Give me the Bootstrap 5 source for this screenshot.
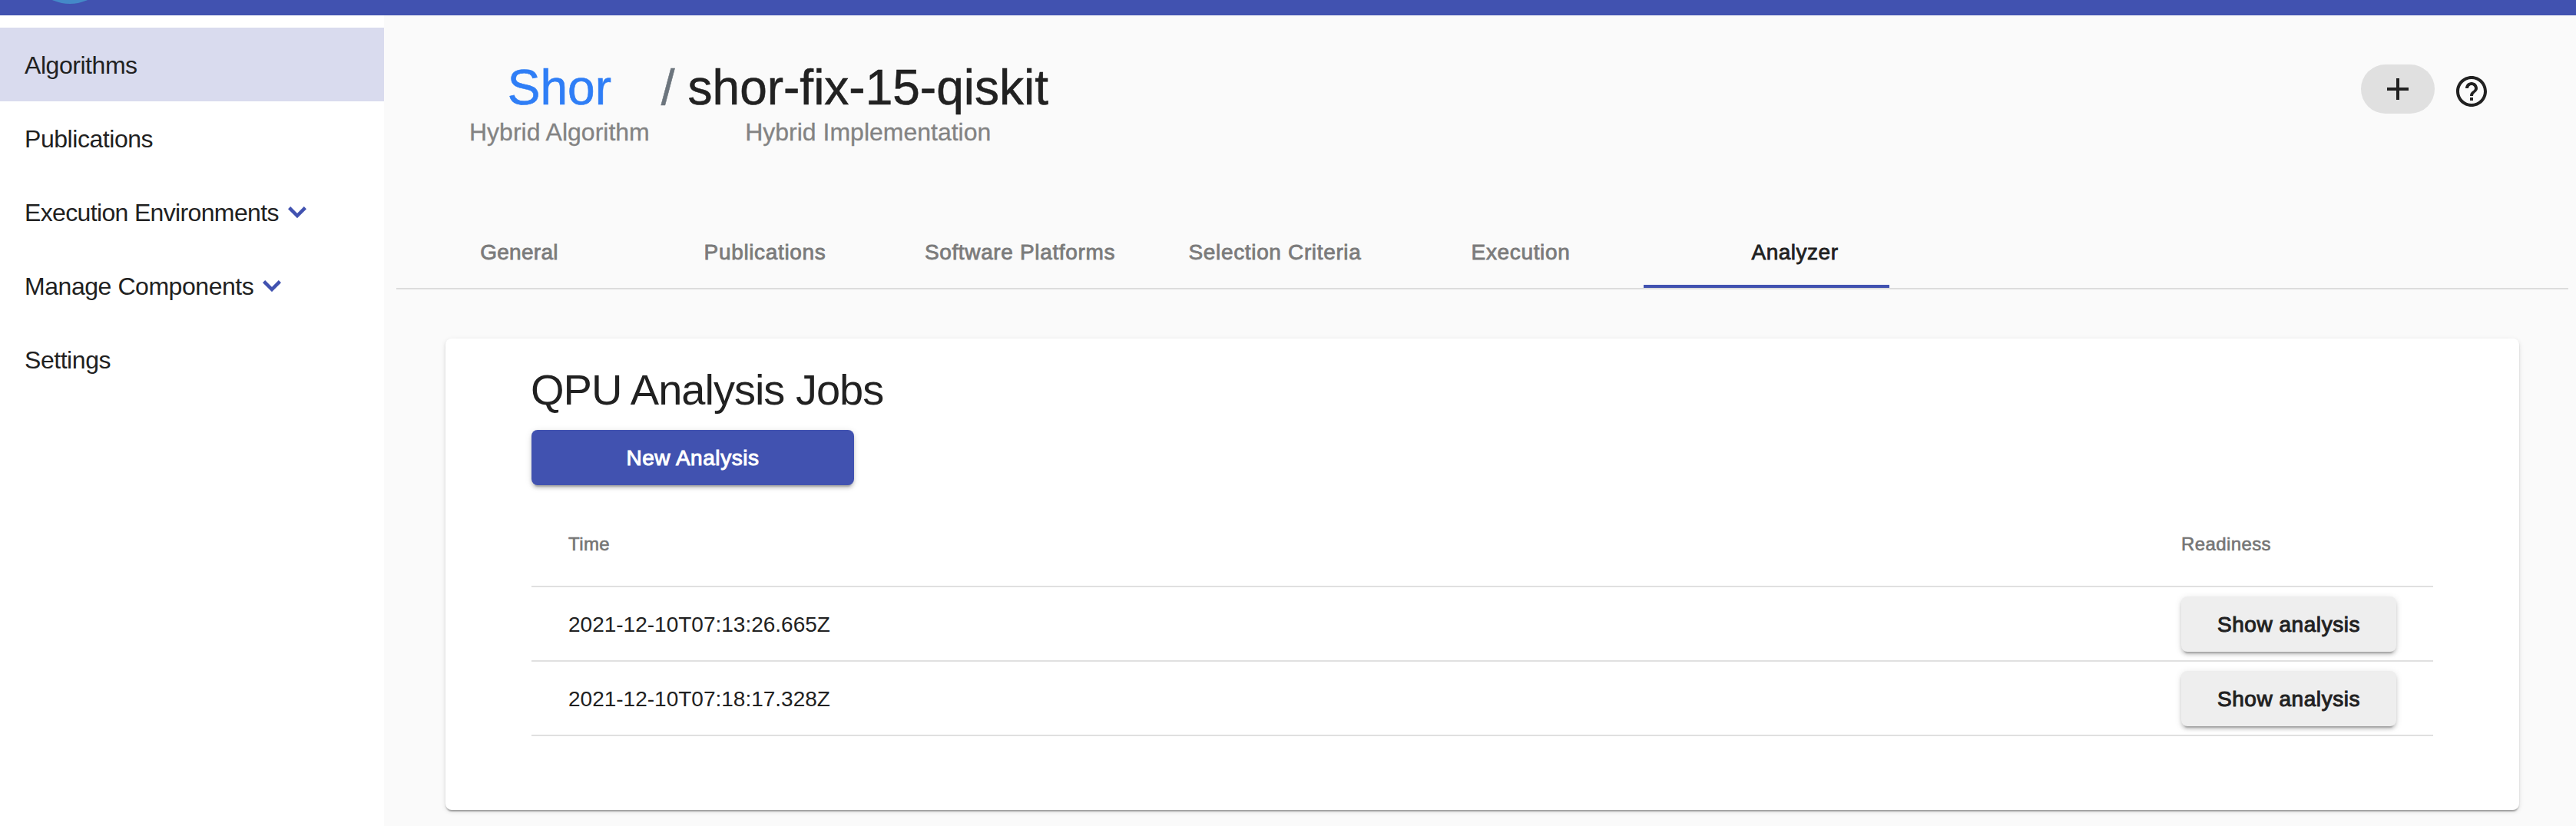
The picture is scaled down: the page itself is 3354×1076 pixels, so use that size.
<!DOCTYPE html>
<html lang="en">
<head>
<meta charset="utf-8">
<meta name="viewport" content="width=device-width, initial-scale=1">
<title>QPU Analysis Jobs</title>
<link href="https://cdn.jsdelivr.net/npm/bootstrap@5.3.0/dist/css/bootstrap.min.css" rel="stylesheet">
<style>
:root { --indigo: #4152b0; --ink: #212121; }
body { font-family: "Liberation Sans", Arial, sans-serif; color: var(--ink); background: #fafafa; height: 1076px; overflow: hidden; }
.topbar { height: 20px; background: var(--indigo); overflow: hidden; padding: 0 0 0 36px; }
.topbar svg { display: block; }
.page-body { height: 1056px; }
.side { width: 500px; background: #fff; padding-top: 16px; }
.side .nav-link { height: 96px; padding: 2px 32px 0; font-size: 32px; line-height: 48px; letter-spacing: -.45px; color: var(--ink); gap: 12px; }
.side .nav-link.long-label { letter-spacing: -.65px; }
.side .nav-link.active { background: #d9dbee; }
.side svg { margin-top: -1px; }
.heading { padding: 56px 112px 0 107px; height: 259px; }
.crumb-big { font-size: 64px; line-height: 76px; -webkit-text-stroke: .6px currentColor; }
.crumb-sub { font-size: 32px; line-height: 36px; color: #838383; margin-top: 2px; -webkit-text-stroke: .3px currentColor; }
.crumb-link { color: #2f7ef6; }
.crumb-slash { color: #6c757d; margin: 0 17px 0 15px; }
.pill { width: 96px; height: 64px; border-radius: 32px; background: #e0e0e0; border: 0; }
.tools { margin-top: 8px; }
.tabs { margin: 0 10px 0 16px; height: 98px; border-bottom: 2px solid #dcdcdc; }
.tabs .nav-link { width: 320px; flex: none; height: 96px; padding: 3px 0 0; border: 0; border-radius: 0; font-size: 28px; letter-spacing: .65px; color: #7b7b7b; -webkit-text-stroke: .8px currentColor; }
.tabs .nav-link.tight-label { letter-spacing: .3px; }
.tabs .nav-link.wide-tab { width: 344px; }
.tabs .nav-link.active { color: var(--ink); border-bottom: 4px solid var(--indigo); padding: 7px 0 0 74px; letter-spacing: .5px; }
.panel { margin: 64px 74px 0 80px; height: 614px; border: 0; border-radius: 8px; padding: 31px 112px; background: #fff; box-shadow: 0 4px 2px -2px rgba(0,0,0,.2), 0 2px 2px 0 rgba(0,0,0,.14), 0 2px 6px 0 rgba(0,0,0,.12); }
.panel h1 { font-size: 56px; line-height: 72px; letter-spacing: -1px; margin: 0 0 16px -1px; font-weight: 400; }
.raised { height: 72px; border: 0; border-radius: 8px; font-size: 28px; letter-spacing: .55px; padding: 1px 0 0; -webkit-text-stroke: 1px currentColor; box-shadow: 0 6px 2px -4px rgba(0,0,0,.2), 0 4px 4px 0 rgba(0,0,0,.14), 0 2px 10px 0 rgba(0,0,0,.12); }
.raised-main { width: 420px; background: var(--indigo); color: #fff; }
.raised-plain { width: 280px; background: #eee; color: var(--ink); padding-top: 2px; }
.jobs { margin: 20px 0 0; color: var(--ink); table-layout: fixed; }
.jobs > :not(caption) > * > * { padding: 0 48px; border-bottom: 2px solid #e0e0e0; vertical-align: middle; background: transparent; color: inherit; }
.jobs > thead > tr > th { height: 112px; padding-top: 3px; font-size: 24px; font-weight: 400; letter-spacing: .4px; color: #757575; -webkit-text-stroke: .6px currentColor; }
.jobs > tbody > tr > td { height: 97px; font-size: 28px; }
.jobs > tbody > tr > td:first-child { padding-top: 2px; }
.jobs th:last-child, .jobs td:last-child { width: 376px; }
</style>
<script src="https://cdn.jsdelivr.net/npm/bootstrap@5.3.0/dist/js/bootstrap.bundle.min.js"></script>
</head>
<body>
<header class="topbar">
  <svg width="110" height="20" viewBox="0 0 110 20"><circle cx="55" cy="-50" r="55" fill="#4489c8"/></svg>
</header>
<div class="page-body d-flex">
  <nav class="side nav flex-column flex-nowrap flex-shrink-0">
    <a class="nav-link active d-flex align-items-center">Algorithms</a>
    <a class="nav-link d-flex align-items-center">Publications</a>
    <a class="nav-link long-label d-flex align-items-center">Execution Environments
      <svg width="24" height="15" viewBox="0 0 24 15" fill="none" stroke="#4152b0" stroke-width="4.500"><path d="M1.600 1.600 12 12 22.400 1.600"/></svg></a>
    <a class="nav-link d-flex align-items-center">Manage Components
      <svg width="24" height="15" viewBox="0 0 24 15" fill="none" stroke="#4152b0" stroke-width="4.500"><path d="M1.600 1.600 12 12 22.400 1.600"/></svg></a>
    <a class="nav-link d-flex align-items-center">Settings</a>
  </nav>
  <main class="flex-grow-1">
    <div class="heading d-flex align-items-start">
      <div class="text-center ps-1">
        <div class="crumb-big crumb-link">Shor</div>
        <div class="crumb-sub">Hybrid Algorithm</div>
      </div>
      <div class="crumb-big crumb-slash">/</div>
      <div class="text-center">
        <div class="crumb-big">shor-fix-15-qiskit</div>
        <div class="crumb-sub">Hybrid Implementation</div>
      </div>
      <div class="tools ms-auto d-flex align-items-start gap-4">
        <button class="pill d-flex align-items-center justify-content-center p-0" aria-label="Add">
          <svg width="28" height="28" viewBox="0 0 28 28"><path d="M12 0h4v12h12v4H16v12h-4V16H0v-4h12z" fill="#212121"/></svg>
        </button>
        <svg class="mt-2" width="48" height="54" viewBox="0 -1.5 24 27" fill="#212121"><path d="M11 18h2v-2h-2v2zm1-16C6.480 2 2 6.480 2 12s4.480 10 10 10 10-4.480 10-10S17.520 2 12 2zm0 18c-4.410 0-8-3.590-8-8s3.590-8 8-8 8 3.590 8 8-3.590 8-8 8zm0-14c-2.210 0-4 1.790-4 4h2c0-1.100.9-2 2-2s2 .9 2 2c0 2-3 1.750-3 5h2c0-2.250 3-2.500 3-5 0-2.210-1.790-4-4-4z"/></svg>
      </div>
    </div>
    <div class="tabs nav flex-nowrap">
      <a class="nav-link tight-label d-flex align-items-center justify-content-center">General</a>
      <a class="nav-link d-flex align-items-center justify-content-center">Publications</a>
      <a class="nav-link wide-tab d-flex align-items-center justify-content-center">Software Platforms</a>
      <a class="nav-link d-flex align-items-center justify-content-center">Selection Criteria</a>
      <a class="nav-link d-flex align-items-center justify-content-center">Execution</a>
      <a class="nav-link active d-flex align-items-center justify-content-center">Analyzer</a>
    </div>
    <section class="panel card">
      <h1>QPU Analysis Jobs</h1>
      <button class="btn raised raised-main">New Analysis</button>
      <table class="table jobs">
        <thead><tr><th>Time</th><th>Readiness</th></tr></thead>
        <tbody>
          <tr><td>2021-12-10T07:13:26.665Z</td><td><button class="btn raised raised-plain d-block">Show analysis</button></td></tr>
          <tr><td>2021-12-10T07:18:17.328Z</td><td><button class="btn raised raised-plain d-block">Show analysis</button></td></tr>
        </tbody>
      </table>
    </section>
  </main>
</div>
</body>
</html>
